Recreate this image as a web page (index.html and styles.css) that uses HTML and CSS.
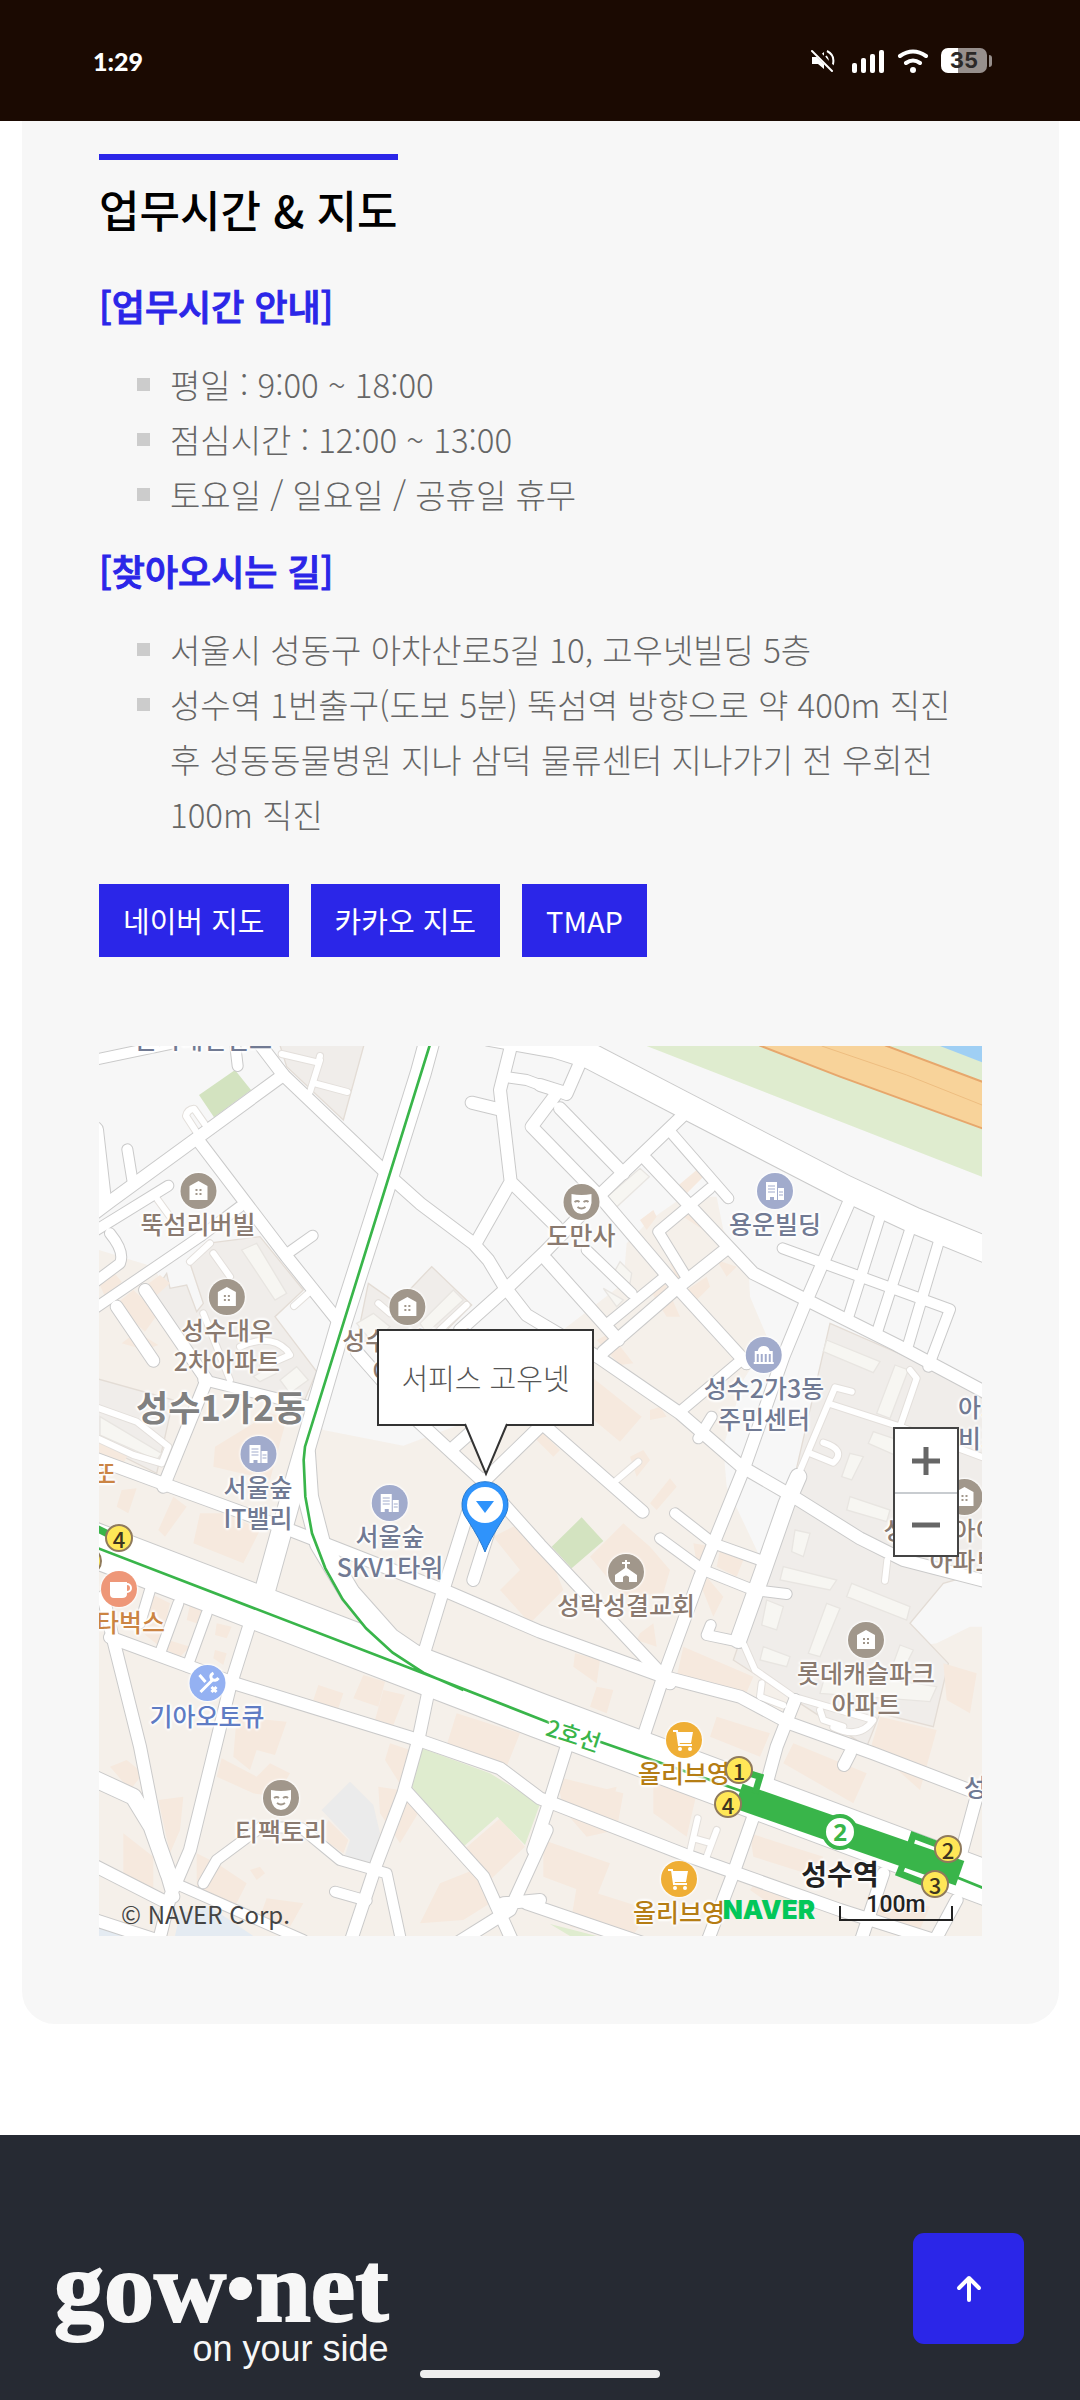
FILE: index.html
```html
<!DOCTYPE html>
<html lang="ko">
<head>
<meta charset="utf-8">
<meta name="viewport" content="width=device-width, initial-scale=1">
<title>업무시간 &amp; 지도</title>
<link rel="stylesheet" href="styles.css">
</head>
<body>
<header class="status">
  <span class="clock">1:29</span>
  <div class="status-icons">
    <svg width="24" height="24" viewBox="0 0 24 24" aria-hidden="true"><path fill="#fff" d="M1 8h6l6-5v17l-6-5H1z"/><path fill="none" stroke="#fff" stroke-width="2" d="M15 7q4 5 0 10M16 2q8 4 6 13l-2 4"/><path stroke="#1b0a02" stroke-width="6" d="M2 0l22 22"/><path stroke="#fff" stroke-width="2" stroke-linecap="round" d="M1 2l20 20"/></svg>
    <svg width="33" height="24" viewBox="0 0 33 24" aria-hidden="true"><g fill="#fff"><rect x="0" y="14" width="5" height="10" rx="2"/><rect x="9" y="9" width="5" height="15" rx="2"/><rect x="18" y="5" width="5" height="19" rx="2"/><rect x="27" y="1" width="5" height="23" rx="2"/></g></svg>
    <svg width="32" height="24" viewBox="0 0 32 24" aria-hidden="true"><g fill="none" stroke="#fff" stroke-width="4" stroke-linecap="round"><path d="M3 7q13-9 26 0M9 14q7-5 14 0"/></g><circle cx="16" cy="21" r="3" fill="#fff"/></svg>
    <span class="battery"><span class="battery-cell">35</span><span class="battery-tip"></span></span>
  </div>
</header>

<main class="card">
  <h2 class="title">업무시간 &amp; 지도</h2>

  <h3 class="subtitle">[업무시간 안내]</h3>
  <ul class="list">
    <li>평일 : 9:00 ~ 18:00</li>
    <li>점심시간 : 12:00 ~ 13:00</li>
    <li>토요일 / 일요일 / 공휴일 휴무</li>
  </ul>

  <h3 class="subtitle subtitle-next">[찾아오시는 길]</h3>
  <ul class="list">
    <li>서울시 성동구 아차산로5길 10, 고우넷빌딩 5층</li>
    <li>성수역 1번출구(도보 5분) 뚝섬역 방향으로 약 400m 직진 후 성동동물병원 지나 삼덕 물류센터 지나가기 전 우회전 100m 직진</li>
  </ul>

  <nav class="links">
    <a class="link-button" href="#naver">네이버 지도</a>
    <a class="link-button" href="#kakao">카카오 지도</a>
    <a class="link-button" href="#tmap">TMAP</a>
  </nav>

  <section class="map" aria-label="지도">
    <svg class="tiles" viewBox="27 48 2649 2670" aria-hidden="true">
      <defs>
        <g id="road-xl"><path d="M-20 1533L1350 2058L2720 2570"/></g>
        <g id="road-l">
          <path d="M1200 10L1400 46L1500 78L1790 229L2260 472L2470 570L2720 672"/>
        </g>
        <g id="road-v">
          <path d="M1022 20L992 130L898 430L757 870L655 1220L620 1340L520 1700"/>
          <path d="M645 1270L654 1400L690 1540L780 1690L900 1825L1010 1900"/>
        </g>
        <g id="road-m">
          <path d="M500 30L580 135L895 435L990 520L1150 640L1195 690L1240 765L1310 855L1360 885L1530 985L1770 1150L1955 1310L2110 1400L2310 1525L2440 1590L2720 1662"/>
          <path d="M0 560L60 515L320 325L580 135M320 325L590 680L750 880"/>
          <path d="M80 830L190 992M165 780L350 1050L220 1370"/>
          <path d="M0 1280L230 1365L600 1500L1060 1680L1350 1805L1720 1940L1950 2000L2100 2080L2350 2170L2720 2312"/>
          <path d="M1270 20L1230 180L1262 455L1160 635M1262 455L1400 590M1145 218L1228 238"/>
          <path d="M1150 1650L1210 1460M1142 1420L1060 1680L1005 1860M1015 1985L985 2130L940 2290L860 2500L780 2740"/>
          <path d="M800 965L980 1170L1180 1355L1350 1545L1740 1960M1370 1170L1180 1355L1142 1430M1080 1262L1150 1200"/>
          <path d="M1478 80L1430 190L1350 165M1400 190L1325 290L1530 500L1760 770L1970 1000M1410 235L1600 430"/>
          <path d="M1780 255L1540 485L1360 670L1250 775L1110 900M1670 390L1990 730L2150 810L2420 945L2720 1105"/>
          <path d="M1905 660L1760 775L1540 965M1370 690L1585 930"/>
          <path d="M2280 510L2150 810L2080 980L1960 1320L1830 1640L1720 1940L1660 2120"/>
          <path d="M40 1700L65 1810L150 2150L215 2480L250 2600M480 1780L420 1970L300 2460L240 2600L205 2740"/>
          <path d="M60 1822L440 1962L985 2130L1230 2215L1350 2305L1800 2480L2250 2640L2720 2790"/>
          <path d="M950 2285L1180 2540L1270 2740M1370 2400L1260 2640L1100 2740M1350 2610L1240 2620"/>
          <path d="M1430 2150L1380 2310L1330 2460M1990 2360L1930 2530L1850 2740M2660 2300L2600 2520M2380 2530L2310 2740M2600 2610L2530 2740"/>
          <path d="M2115 2010L2060 2150L2030 2260M2280 2170L2262 2205M1350 1175L1658 1445"/>
          <path d="M0 2500L235 2620M0 2665L230 2740M1310 2620L1720 2760"/>
        </g>
        <g id="road-w">
          <path d="M2125 1340L2090 1420L2020 1620L1945 1830"/>
          <path d="M0 2240L130 2300L185 2390L235 2530M15 300L40 520"/>
        </g>
        <g id="road-s">
          <path d="M0 92L250 40M435 40L443 108M590 672L668 617M112 358L127 450M0 612L235 467M60 610Q105 665 90 700L10 760M0 845L330 620L450 530"/>
          <path d="M340 1050L660 1130M1240 140L1310 150L1430 195"/>
          <path d="M1745 310L1915 505M1860 475L1705 605L1785 735M1490 660L1625 790M1725 740L1560 875M1960 985L1770 1145M1865 1160L1825 1225"/>
          <path d="M2370 560L2275 860M2460 600L2360 910M2545 640L2450 960M2078 655L2580 838L2515 1010"/>
          <path d="M1755 1450L1870 1540L2010 1590M1710 1525L1840 1620L1990 1680L2090 1692M1945 1835L1850 1815L1862 1785"/>
          <path d="M350 1750L292 1910M265 1720L210 1870M180 1680L150 1780M340 2560L380 2490L515 2390L635 2395L750 2490L890 2530L935 2740M735 2585L830 2612M255 2560L640 2730"/>
        </g>
        <g id="road-xs">
          <path d="M325 315L288 258Q292 238 312 236L350 290M200 505L240 560M575 72L685 98L690 78M690 90L660 185M675 160L772 186M360 640L300 695M370 670L420 740M660 785L612 828"/>
          <path d="M0 1125L140 1175L235 1250L215 1300L130 1275L0 1215M450 950Q540 910 590 960L600 975L520 1010M340 850L420 1050M865 820L900 850M1130 825L1050 900"/>
          <path d="M1580 1350L1645 1295M2285 1085L2235 1072L2110 1370M2220 1122L2430 1190L2480 1045L2460 1020M2160 1270L2230 1298Q2270 1260 2200 1238M2430 1190L2700 1290"/>
          <path d="M1960 1840L1995 1920L2110 2000L2350 2070Q2310 2130 2230 2092M2015 1960L2010 2000L2080 2026M2190 2040L2200 2070L2260 2090M2392 1590L2385 1652"/>
          <path d="M1823 2365L1800 2465M1880 2400L1850 2480M1812 2425L1865 2440"/>
        </g>
      </defs>
      <rect class="land" x="27" y="48" width="2649" height="2670"/>
      <path class="block" d="M27 660L190 710L255 830L255 900L350 1050L640 1120L700 1200L940 1247L1200 1150L1380 930L1600 760L1610 640L1680 570L1780 500L1880 500L1900 600L1975 700L1980 800L2035 930L1960 1050L1900 1250L1910 1370L2000 1560L2130 1900L2540 1840L2640 1790H2720V2740H0V660Z"/>
      <path class="estate" d="M565 30H826L760 270L590 110ZM350 640L510 620L640 780L555 860L680 1025L640 1120L350 1050L190 790L230 730L240 775L290 765L320 845L340 820L300 700ZM835 760L920 820L1025 710L1145 825L1010 960L800 930ZM0 1040L250 1110L200 1330L0 1230ZM2220 880L2540 1020L2700 1120V1620L2560 1660L2460 1780L2575 1900L2530 2090L2370 2050L2330 2150L1930 1890L2100 1400Z"/>
      <path class="apt" d="M455 660L500 640L590 790L555 810ZM2210 930L2370 995L2350 1028L2200 965ZM2415 1005L2455 1020L2400 1165L2360 1150ZM2350 1205L2430 1232L2415 1275L2335 1240ZM2280 1270L2320 1280L2285 1350L2255 1340ZM2280 1400L2400 1440L2390 1475L2270 1440ZM2115 1500L2160 1510L2140 1580L2105 1565ZM2080 1610L2240 1650L2220 1680L2070 1650ZM2285 1660L2460 1730L2450 1770L2270 1700ZM2030 1710L2080 1730L2060 1800L2015 1785ZM2210 1720L2250 1735L2190 1880L2155 1870ZM2020 1850L2100 1880L2090 1910L2010 1890ZM2210 1920L2540 1970L2520 2015L2190 1990ZM2430 1845L2470 1860L2440 1920L2410 1900ZM490 1040L540 1010L560 1030L510 1055ZM570 1050L620 1010L655 1050L600 1090ZM800 880L850 850L900 890L850 940ZM990 880L1090 780L1120 810L1010 910ZM30 1160L215 1270L200 1290L30 1215ZM1540 510L1650 415L1678 440L1570 540ZM1565 740L1590 695L1625 730L1620 760ZM1540 775L1600 810L1580 830Z"/>
      <path class="house" d="M27 760L70 725L95 755L50 810ZM75 825L130 780L205 850L165 905ZM170 765L210 735L240 760L195 800ZM95 940L140 905L205 945L165 960ZM375 1250L540 1150L590 1165L540 1350L370 1310ZM330 1450L410 1450L510 1500L460 1600L310 1540ZM27 1225L120 1265L100 1300L27 1270ZM95 1380L140 1375L115 1450L80 1430ZM250 1400L290 1430L225 1520L205 1500ZM225 1560L340 1610L330 1625L230 1580ZM180 1690L240 1720L210 1850L160 1810ZM300 1725L340 1735L320 1780L290 1770ZM235 1830L300 1850L270 1880L230 1860ZM380 1780L425 1790L410 1825L375 1815ZM375 1860L410 1870L400 1905L370 1885ZM685 1965L760 1990L740 2050L665 2025ZM820 1935L885 1955L865 2030L790 2005ZM880 1980L945 1995L910 2085L855 2070ZM440 2060L590 2075L555 2175L500 2160L480 2220L430 2180ZM395 2185L500 2240L540 2200L600 2230L560 2300L490 2290L380 2240ZM900 2140L960 2160L935 2270L885 2190ZM865 2270L930 2280L990 2340L930 2440L870 2350ZM1100 2050L1290 2110L1250 2210L1070 2145ZM1230 2365L1305 2450L1200 2550L1120 2460ZM1050 2560L1150 2520L1200 2620L1120 2670L990 2680ZM690 2420L760 2470L775 2430L715 2370ZM100 2410L190 2480L190 2590L100 2530ZM60 2210L110 2190L160 2230L120 2280ZM205 2310L280 2300L270 2400L240 2470ZM320 2470L380 2500L470 2560L430 2640L320 2600ZM530 2605L640 2620L600 2690L510 2660ZM480 2520L510 2510L525 2530L500 2550ZM1290 1480L1380 1580L1420 1680L1320 1780L1230 1680L1290 1620L1210 1520ZM1500 1580L1600 1480L1680 1550L1740 1620L1720 1690L1600 1700ZM1810 1540L1870 1550L1850 1640L1900 1700L1870 1760L1830 1660ZM1890 1560L1960 1590L1940 1640L1880 1610ZM1455 1870L1530 1890L1520 1960L1450 1910ZM1780 1850L1990 1940L1960 2010L1760 1940ZM1650 1810L1690 1780L1700 1850L1640 1830ZM1520 1970L1570 1980L1550 2050L1500 2030ZM1880 2060L2040 2110L2010 2180L1860 2120ZM2110 2140L2330 2230L2290 2320L2080 2200ZM2370 2060L2540 2100L2490 2280L2400 2200L2340 2160ZM2560 1900L2660 1930L2640 2050L2570 2010ZM1400 2240L1600 2290L1580 2400L1490 2420L1420 2340ZM1500 2290L1580 2270L1560 2350L1500 2330ZM1690 2240L1820 2290L1790 2420L1690 2350ZM1980 2410L2200 2480L2180 2540L1990 2480ZM2010 2540L2120 2590L2080 2650L1980 2580ZM1360 2430L1560 2500L1520 2600L1360 2540ZM1460 2570L1680 2640L1620 2730L1440 2690ZM2350 2590L2520 2630L2480 2720L2330 2670ZM1510 1045L1655 1160L1590 1235L1500 1160ZM1780 520L1850 580L1840 600L1780 560ZM1760 470L1820 420L1840 440L1780 500ZM1650 570L1690 540L1700 560L1670 600ZM1880 690L1940 710L1910 740ZM1790 780L1850 740L1860 770L1820 810ZM1740 700L1790 720L1765 755ZM1680 780L1720 750L1730 770L1770 860L1730 860ZM1520 930L1560 910L1630 1000L1590 1005ZM1680 1140L1710 1130L1730 1160L1680 1170ZM1620 1280L1660 1260L1680 1290L1640 1340ZM1350 1200L1410 1260L1390 1280L1340 1230ZM1680 1420L1740 1345L1760 1370L1700 1440Z"/>
      <path class="yard" d="M695 2340L780 2255L850 2325L870 2410L845 2500L765 2475L780 2430Z"/>
      <path class="pond" d="M255 2718L270 2650L360 2630L490 2718ZM0 2670L110 2718H0Z"/>
      <path class="park" d="M327 195L435 120L483 180L372 262ZM1385 1550L1475 1462L1540 1533L1445 1615Z"/>
      <path class="lawn" d="M1670 48L2060 200L2676 440V48ZM995 2155L1200 2230L1350 2322L1305 2445L1222 2360L1120 2450L965 2270ZM1380 2682L1520 2718H1440Z"/>
      <path class="river" d="M2550 48L2676 97V48Z"/>
      <path class="highway" d="M2008 46L2250 140L2690 300V160L2385 46"/>
      <path class="highway-mid" d="M2195 48L2450 135L2676 225"/>

      <use href="#road-xs" class="casing xs"/><use href="#road-s" class="casing s"/><use href="#road-m" class="casing m"/><use href="#road-w" class="casing w"/><use href="#road-v" class="casing v"/><use href="#road-l" class="casing l"/><use href="#road-xl" class="casing xl"/>
      <use href="#road-xs" class="road xs"/><use href="#road-s" class="road s"/><use href="#road-m" class="road m"/><use href="#road-w" class="road w"/><use href="#road-v" class="road v"/><use href="#road-l" class="road l"/><use href="#road-xl" class="road xl"/>

      <path class="rail" d="M1021 40L645 1250L641 1290L646 1400L666 1510L706 1615L758 1708L828 1795L908 1868L1000 1928L1120 1980M20 1553L1000 1930L1378 2078M1530 2135L1960 2285M2600 2542L2690 2578"/>
      <path class="rail-wide" d="M20 1495L60 1515"/>
      <path class="platform" d="M1945 2298L2610 2530"/>
      <path class="exit-path" d="M1960 2225L2010 2240L1995 2290M2455 2460L2470 2416L2560 2450M2440 2500L2428 2530L2530 2570"/>
    </svg>

    <svg class="sprites" aria-hidden="true">
      <symbol id="i-house" viewBox="0 0 36 36"><path fill="#fff" d="M18 8l9 5v14H9V13z"/><path fill="#a1978b" d="M15 16h2v2h-2zm4 0h2v2h-2zm-4 4h2v2h-2zm4 0h2v2h-2z"/></symbol>
      <symbol id="i-mask" viewBox="0 0 36 36"><path fill="#fff" d="M8 10q10 2 20 0v9q-2 11-10 11T8 19z"/><path fill="none" stroke="#a1978b" stroke-width="2" d="M11 18q3-2 5 0M20 18q3-2 5 0M14 23q4 3 8 0"/></symbol>
      <symbol id="i-office" viewBox="0 0 36 36"><path fill="#fff" d="M9 9h11v18h-3v-3h-4v3H9zM21 15h6v12h-6z"/><path stroke="#a1abcc" stroke-width="1" d="M11 13h7M11 16h7M11 19h7M22 19h4M22 22h4"/></symbol>
      <symbol id="i-hall" viewBox="0 0 36 36"><path fill="#fff" d="M8 27v-2h1V14h3q1-5 6-5t6 5h3v11h1v2z"/><path stroke="#a1abcc" stroke-width="2" d="M12 17v8M16 17v8M20 17v8M24 17v8"/></symbol>
      <symbol id="i-church" viewBox="0 0 36 36"><path fill="#fff" d="M17 6h2v2h3v2h-3v4l10 7v7h-8v-5q-3-3-6 0v5H7v-7l10-7v-4h-3V8h3z"/></symbol>
      <symbol id="i-cart" viewBox="0 0 36 36"><path fill="#fff" d="M12 10h15l-2 11H12z"/><path fill="none" stroke="#fff" stroke-width="2" d="M7 9h4l2 14h13"/><circle cx="14" cy="27" r="2" fill="#fff"/><circle cx="24" cy="27" r="2" fill="#fff"/></symbol>
      <symbol id="i-cup" viewBox="0 0 36 36"><path fill="#fff" d="M9 11h17v12q0 4-5 4h-8q-4 0-4-4z"/><circle cx="26" cy="17" r="4" fill="none" stroke="#fff" stroke-width="2"/></symbol>
      <symbol id="i-repair" viewBox="0 0 36 36"><path fill="none" stroke="#fff" stroke-width="3" d="M11 27l12-12M10 10l6 7"/><path fill="none" stroke="#fff" stroke-width="3" d="M24 8q-4 2-2 6 4 3 7-1M22 22l5 5M27 22l-5 5"/></symbol>
    </svg>

    <div class="poi brown" style="left:99px;top:127px"><svg><use href="#i-house"/></svg><span>뚝섬리버빌</span></div>
    <div class="poi brown" style="left:128px;top:233px"><svg><use href="#i-house"/></svg><span>성수대우<br>2차아파트</span></div>
    <div class="poi brown" style="left:308px;top:243px"><svg><use href="#i-house"/></svg><span>성수2차현대<br>아파트</span></div>
    <div class="poi brown" style="left:482px;top:138px"><svg><use href="#i-mask"/></svg><span>도만사</span></div>
    <div class="poi slate" style="left:676px;top:127px"><svg><use href="#i-office"/></svg><span>용운빌딩</span></div>
    <div class="poi slate" style="left:665px;top:291px"><svg><use href="#i-hall"/></svg><span>성수2가3동<br>주민센터</span></div>
    <div class="poi slate" style="left:159px;top:390px"><svg><use href="#i-office"/></svg><span>서울숲<br>IT밸리</span></div>
    <div class="poi slate" style="left:291px;top:439px"><svg><use href="#i-office"/></svg><span>서울숲<br>SKV1타워</span></div>
    <div class="poi brown" style="left:527px;top:508px"><svg><use href="#i-church"/></svg><span>성락성결교회</span></div>
    <div class="poi brown" style="left:767px;top:576px"><svg><use href="#i-house"/></svg><span>롯데캐슬파크<br>아파트</span></div>
    <div class="poi brown" style="left:865px;top:433px"><svg><use href="#i-house"/></svg><span>성수역아이파크<br>아파트</span></div>
    <div class="poi blue" style="left:108px;top:619px"><svg><use href="#i-repair"/></svg><span>기아오토큐</span></div>
    <div class="poi brown" style="left:182px;top:734px"><svg><use href="#i-mask"/></svg><span>티팩토리</span></div>
    <div class="poi gold" style="left:585px;top:676px"><svg><use href="#i-cart"/></svg><span>올리브영</span></div>
    <div class="poi gold" style="left:580px;top:815px"><svg><use href="#i-cart"/></svg><span>올리브영</span></div>
    <div class="poi coral" style="left:20px;top:525px"><svg><use href="#i-cup"/></svg><span>스타벅스</span></div>

    <div class="poi slate" style="left:882px;top:345px"><span>아크<br>비즈</span></div>
    <div class="poi slate" style="left:888px;top:725px"><span>성수</span></div>
    <div class="poi slate" style="left:104px;top:-23px"><span>한시대전건드</span></div>
    <div class="poi coral" style="left:-6px;top:411px"><span>로또</span></div>
    <div class="district" style="left:122px;top:335px">성수1가2동</div>
    <div class="line-name" style="left:475px;top:672px">2호선</div>

    <div class="exit" style="left:20px;top:492px">4</div>
    <div class="exit" style="left:-11px;top:515px">3</div>
    <div class="exit" style="left:640px;top:724px">1</div>
    <div class="exit" style="left:629px;top:758px">4</div>
    <div class="exit" style="left:849px;top:803px">2</div>
    <div class="exit" style="left:836px;top:838px">3</div>
    <div class="station-mark" style="left:741px;top:786px">2</div>
    <div class="station" style="left:741px;top:807px">성수역</div>

    <svg class="pin" viewBox="0 0 48 72" aria-hidden="true"><path fill="#2f93fb" stroke="#2478cf" stroke-width="1" d="M24 71Q20 60 6 38a23 23 0 1 1 36 0Q28 60 24 71z"/><circle cx="24" cy="24" r="18" fill="#fff"/><path fill="#2f93fb" d="M15 20h18l-9 12z"/></svg>
    <div class="callout">서피스 고우넷<svg viewBox="0 0 44 54" aria-hidden="true"><path fill="#fff" stroke="#333" stroke-width="2" d="M1 1l21 50L43 1"/></svg></div>

    <div class="zoom">
      <button type="button" aria-label="확대"><svg viewBox="0 0 28 28"><path stroke="#666" stroke-width="5" d="M0 14h28M14 0v28"/></svg></button>
      <button type="button" aria-label="축소"><svg viewBox="0 0 28 28"><path stroke="#666" stroke-width="5" d="M0 14h28"/></svg></button>
    </div>

    <div class="copyright">© NAVER Corp.</div>
    <div class="credits"><a class="naver" href="#naver">NAVER</a><span class="scale">100m</span></div>
  </section>
</main>

<footer class="footer">
  <div class="logo">
    <div class="wordmark">gow<i class="dot"></i>net</div>
    <div class="tagline">on your side</div>
  </div>
</footer>

<button class="to-top" type="button" aria-label="맨 위로"><svg viewBox="0 0 28 28"><path fill="none" stroke="#fff" stroke-width="4" stroke-linecap="round" stroke-linejoin="round" d="M14 25V3M4 13L14 3l10 10"/></svg></button>
<div class="home-bar"></div>
</body>
</html>
```
FILE: styles.css
```css
* { box-sizing: border-box; }

body {
  margin: 0;
  background: #fff;
  color: #666;
  font-family: "Noto Sans CJK KR", sans-serif;
  word-break: keep-all;
}

/* status bar */
.status {
  display: flex;
  justify-content: space-between;
  align-items: center;
  height: 121px;
  padding: 0 88px 0 93px;
  background: #1b0a02;
  color: #fff;
}
.clock { font: 900 25px/32px Lato, sans-serif; }
.status-icons { display: flex; align-items: center; gap: 12px; }
.status-icons svg:first-child { margin-right: 5px; }
.battery { display: flex; align-items: center; gap: 2px; }
.battery-cell {
  width: 46px;
  border-radius: 7px;
  background: linear-gradient(90deg, #fff 17px, #978f8c 17px);
  color: #2b2827;
  font: 700 22px/25px Inter, sans-serif;
  text-align: center;
}
.battery-tip { width: 3px; height: 12px; border-radius: 0 3px 3px 0; background: #978f8c; }

/* office hours card */
.card {
  margin: 0 21px 111px 22px;
  padding: 33px 77px 88px;
  border-radius: 0 0 33px 33px;
  background: #f7f7f7;
}
.title {
  width: fit-content;
  margin: 0;
  padding-top: 19px;
  border-top: 6px solid #2b26e8;
  color: #000;
  font-size: 44px;
  font-weight: 500;
  line-height: 60px;
}
.subtitle {
  margin: 41px 0 27px;
  color: #2b26e8;
  font-size: 36px;
  font-weight: 500;
  line-height: 50px;
  -webkit-text-stroke: 1px #2b26e8;
}
.subtitle-next { margin-top: 23px; }
.list {
  margin: 0;
  padding: 0;
  list-style: none;
  font-size: 33px;
  font-weight: 300;
  line-height: 55px;
}
.list li { display: flex; gap: 20px; padding-left: 38px; }
.list li::before {
  content: "";
  flex: none;
  width: 13px;
  height: 13px;
  margin-top: 21px;
  background: #ccc;
}
.links { display: flex; flex-wrap: wrap; gap: 22px; margin: 42px 0 89px; }
.link-button {
  padding: 0 24px;
  background: #2b26e8;
  color: #fff;
  font-size: 29px;
  line-height: 73px;
  text-decoration: none;
}

/* map */
.map { position: relative; overflow: hidden; }
.tiles { display: block; width: 100%; }
.sprites { position: absolute; width: 0; height: 0; }
.land { fill: #f7f7f7; }
.block { fill: #f5f0ea; }
.estate { fill: #f0edea; stroke: #e3dcd5; stroke-width: 4; }
.apt { fill: #f7f6f2; stroke: #e8e5e1; stroke-width: 4; }
.house { fill: #f6e9de; }
.yard { fill: #ebebeb; }
.pond { fill: #e4ebf2; }
.park { fill: #d3e3c0; }
.lawn { fill: #dfeccf; }
.river { fill: #9fcff4; }
.highway { fill: #f8d39a; stroke: #e7a76c; stroke-width: 6; }
.highway-mid { fill: none; stroke: #edbd80; stroke-width: 3; }
.casing, .road { fill: none; stroke-linecap: round; stroke-linejoin: round; }
.casing { stroke: #cacaca; }
.road { stroke: #fff; }
.casing.xs { stroke: #e3dfdb; stroke-width: 24px; }
.casing.s { stroke-width: 36px; }
.casing.m { stroke-width: 42px; }
.casing.w { stroke-width: 54px; }
.casing.v { stroke-width: 66px; }
.casing.l { stroke-width: 82px; }
.casing.xl { stroke-width: 138px; }
.road.xs { stroke-width: 18px; }
.road.s { stroke-width: 30px; }
.road.m { stroke-width: 36px; }
.road.w { stroke-width: 48px; }
.road.v { stroke-width: 60px; }
.road.l { stroke-width: 76px; }
.road.xl { stroke-width: 132px; }
.rail, .rail-wide, .platform, .exit-path { fill: none; stroke: #39b54a; }
.rail { stroke-width: 8; }
.rail-wide { stroke-width: 22; }
.platform { stroke-width: 78; }
.exit-path { stroke-width: 20; }

.poi, .district, .line-name, .station {
  position: absolute;
  transform: translateX(-50%);
  font-weight: 500;
  text-align: center;
  white-space: nowrap;
  text-shadow: 0 0 2px #fff, 2px 0 2px #fff, -2px 0 2px #fff, 0 2px 2px #fff, 0 -2px 2px #fff;
}
.poi {
  display: flex;
  flex-direction: column;
  align-items: center;
  font-size: 25px;
  line-height: 31px;
}
.poi svg { width: 36px; height: 36px; margin-bottom: -1px; border-radius: 50%; box-shadow: 0 0 2px 1px #fff; }
.brown { color: #8a7a70; }
.brown svg { background: #a1978b; }
.slate { color: #717a93; }
.slate svg { background: #a1abcc; }
.blue { color: #5f7cc4; }
.blue svg { background: #94b1f2; }
.gold { color: #b57d14; }
.gold svg { background: #efae35; }
.coral { color: #cb8443; }
.coral svg { background: #ee9778; }
.district { color: #808080; font-size: 35px; font-weight: 700; line-height: 50px; }
.line-name { color: #39b54a; font-size: 23px; line-height: 32px; transform: translateX(-50%) rotate(18deg); }
.station { color: #222; font-size: 28px; font-weight: 700; line-height: 40px; }
.exit {
  position: absolute;
  width: 28px;
  height: 28px;
  border: 2px solid #8f7a5c;
  border-radius: 50%;
  background: #ffe757;
  color: #3d3520;
  font-size: 22px;
  font-weight: 500;
  line-height: 24px;
  text-align: center;
  transform: translate(-50%, -50%);
}
.station-mark {
  position: absolute;
  width: 36px;
  height: 36px;
  border: 4px solid #39b54a;
  border-radius: 50%;
  background: #fff;
  color: #39b54a;
  font: 700 24px/28px "Noto Sans", sans-serif;
  text-align: center;
  transform: translate(-50%, -50%);
}
.pin { position: absolute; left: 362px; top: 435px; width: 48px; height: 72px; }
.callout {
  position: absolute;
  left: 278px;
  top: 283px;
  width: 217px;
  border: 2px solid #333;
  background: #fff;
  color: #555;
  font-size: 29px;
  font-weight: 300;
  line-height: 93px;
  text-align: center;
}
.callout svg { position: absolute; left: 85px; top: 92px; width: 44px; height: 54px; }
.zoom {
  position: absolute;
  right: 23px;
  top: 381px;
  display: flex;
  flex-direction: column;
  width: 66px;
  border: 2px solid #444;
  background: #fff;
}
.zoom button {
  display: grid;
  place-items: center;
  height: 63px;
  padding: 0;
  border: 0;
  background: none;
}
.zoom button + button { border-top: 2px solid #c8ccd0; }
.zoom svg { width: 28px; height: 28px; }
.copyright {
  position: absolute;
  left: 22px;
  bottom: 4px;
  color: #444;
  font-size: 24px;
  line-height: 36px;
}
.credits {
  position: absolute;
  right: 29px;
  bottom: 15px;
  display: flex;
  align-items: flex-end;
  gap: 24px;
}
.naver { color: #03c75a; font: 900 26px/22px Inter, sans-serif; text-decoration: none; }
.scale {
  position: relative;
  width: 114px;
  color: #222;
  font: 500 23px/32px Roboto, sans-serif;
  text-align: center;
  text-shadow: 0 0 2px #fff, 1px 1px 1px #fff;
}
.scale::after {
  content: "";
  position: absolute;
  inset: auto 0 0;
  height: 13px;
  border: 2px solid #222;
  border-top: 0;
}

/* footer */
.footer { min-height: 265px; padding: 135px 54px 0; background: #262a33; color: #f7f7f7; }
.logo { width: fit-content; }
.wordmark { margin-bottom: 23px; font: 700 100px/36px "Liberation Serif", serif; -webkit-text-stroke: 2px #f7f7f7; }
.dot {
  display: inline-block;
  width: 23px;
  height: 23px;
  margin: 0 3px;
  border-radius: 50%;
  background: #f7f7f7;
  vertical-align: 21px;
}
.tagline { font: 400 36px/40px "Liberation Sans", sans-serif; text-align: right; }

.to-top {
  position: fixed;
  right: 56px;
  bottom: 56px;
  display: grid;
  place-items: center;
  width: 111px;
  height: 111px;
  padding: 0;
  border: 0;
  border-radius: 11px;
  background: #2b26e8;
}
.to-top svg { width: 28px; height: 28px; }
.home-bar {
  position: fixed;
  left: 50%;
  bottom: 22px;
  width: 240px;
  height: 8px;
  margin-left: -120px;
  border-radius: 4px;
  background: #eee;
}
```
